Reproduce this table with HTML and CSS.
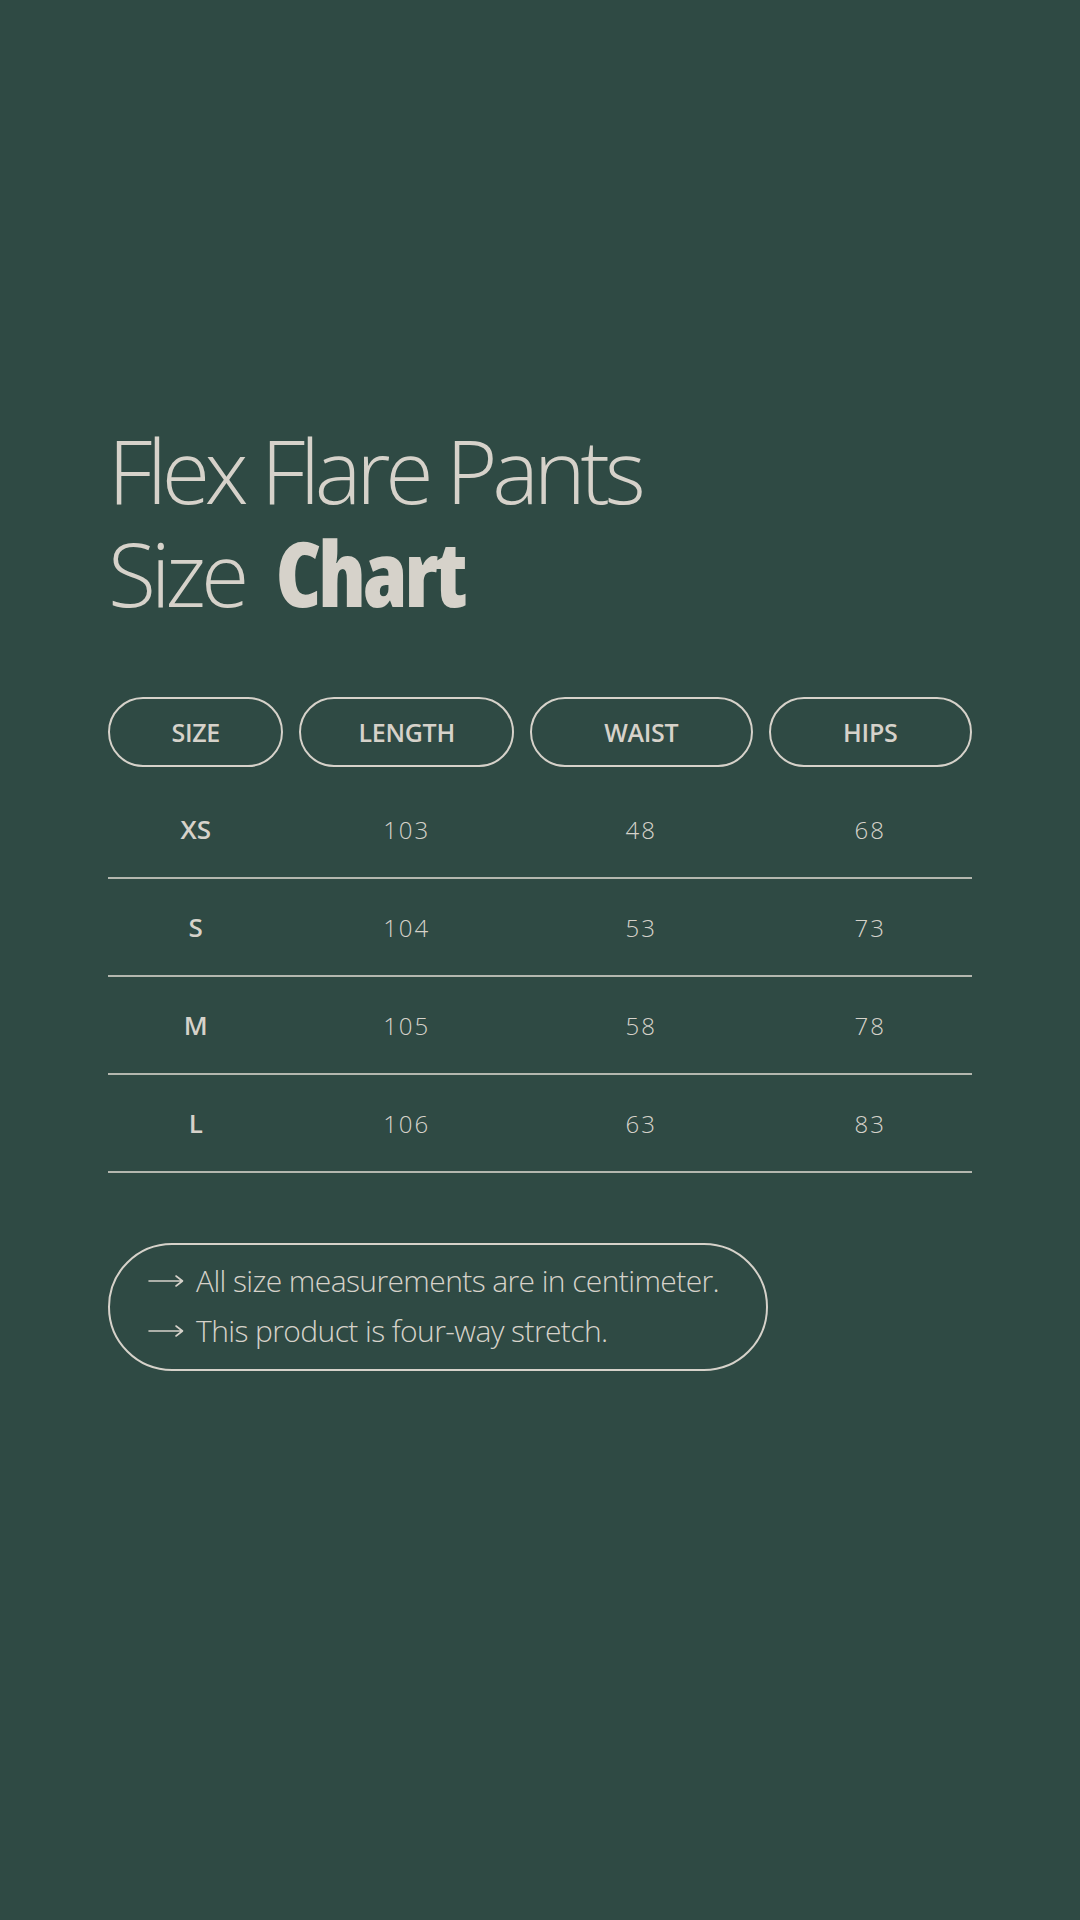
FILE: index.html
```html
<!DOCTYPE html>
<html lang="en">
<head>
<meta charset="utf-8">
<title>Flex Flare Pants Size Chart</title>
<link rel="stylesheet" href="styles.css">
</head>
<body>
<main class="page">
  <h1 class="title">
    <span class="title-line">Flex Flare Pants</span>
    <span class="title-line">Size <strong class="title-strong">Chart</strong></span>
  </h1>

  <section class="chart">
    <div class="chart-head">
      <div class="pill">SIZE</div>
      <div class="pill">LENGTH</div>
      <div class="pill">WAIST</div>
      <div class="pill">HIPS</div>
    </div>
    <div class="chart-row">
      <div class="cell cell-size">XS</div>
      <div class="cell">103</div>
      <div class="cell">48</div>
      <div class="cell">68</div>
    </div>
    <div class="chart-row">
      <div class="cell cell-size">S</div>
      <div class="cell">104</div>
      <div class="cell">53</div>
      <div class="cell">73</div>
    </div>
    <div class="chart-row">
      <div class="cell cell-size">M</div>
      <div class="cell">105</div>
      <div class="cell">58</div>
      <div class="cell">78</div>
    </div>
    <div class="chart-row">
      <div class="cell cell-size">L</div>
      <div class="cell">106</div>
      <div class="cell">63</div>
      <div class="cell">83</div>
    </div>
  </section>

  <aside class="notes">
    <p class="note">
      <svg class="arrow" viewBox="0 0 36 14" aria-hidden="true"><path d="M1 7H34M28 2L34.5 7L28 12" fill="none" stroke="currentColor" stroke-width="1.6" stroke-linecap="round" stroke-linejoin="round"/></svg>
      <span>All size measurements are in centimeter.</span>
    </p>
    <p class="note">
      <svg class="arrow" viewBox="0 0 36 14" aria-hidden="true"><path d="M1 7H34M28 2L34.5 7L28 12" fill="none" stroke="currentColor" stroke-width="1.6" stroke-linecap="round" stroke-linejoin="round"/></svg>
      <span>This product is four-way stretch.</span>
    </p>
  </aside>
</main>
</body>
</html>
```
FILE: styles.css
```css
html, body {
  margin: 0;
  padding: 0;
}

body {
  background: #2f4a44;
  color: #d6d2ca;
  font-family: "Open Sans", "Noto Sans", sans-serif;
  width: 1080px;
  min-height: 1920px;
}

.page {
  padding: 419px 108px 0 108px;
  display: flex;
  flex-direction: column;
  align-items: flex-start;
}

.title {
  margin: 0;
  font-size: 88px;
  line-height: 102px;
  font-weight: 300;
  letter-spacing: -5.2px;
  display: flex;
  flex-direction: column;
}

.title-line {
  display: block;
  white-space: nowrap;
}

.title-strong {
  margin-left: 14px;
  font-size: 90px;
  font-weight: 800;
  font-stretch: 75%;
  letter-spacing: -3px;
}

.chart {
  width: 864px;
  margin-top: 73px;
}

.chart-head,
.chart-row {
  display: grid;
  grid-template-columns: 175fr 214fr 222fr 203fr;
  column-gap: 16px;
}

.pill {
  height: 70px;
  box-sizing: border-box;
  border: 2px solid #d6d2ca;
  border-radius: 35px;
  display: flex;
  align-items: center;
  justify-content: center;
  font-size: 25px;
  font-weight: 600;
  letter-spacing: -0.3px;
}

.chart-head {
  margin-bottom: 14px;
}

.chart-row {
  height: 98px;
  box-sizing: border-box;
  border-bottom: 2px solid rgba(214, 210, 202, 0.8);
  align-items: center;
}

.cell {
  text-align: center;
  font-size: 24px;
  font-weight: 300;
  letter-spacing: 2px;
}

.cell-size {
  font-size: 26px;
  font-weight: 600;
  letter-spacing: 0;
}

.notes {
  margin-top: 70px;
  width: 660px;
  box-sizing: border-box;
  border: 2px solid #d6d2ca;
  border-radius: 64px;
  padding: 11px 20px 13px 38px;
  display: flex;
  flex-direction: column;
}

.note {
  margin: 0;
  display: flex;
  align-items: center;
  gap: 12px;
  font-size: 30px;
  line-height: 50px;
  font-weight: 300;
  letter-spacing: -0.6px;
  white-space: nowrap;
}

.arrow {
  width: 36px;
  height: 14px;
  flex: none;
  color: #d6d2ca;
}
```
